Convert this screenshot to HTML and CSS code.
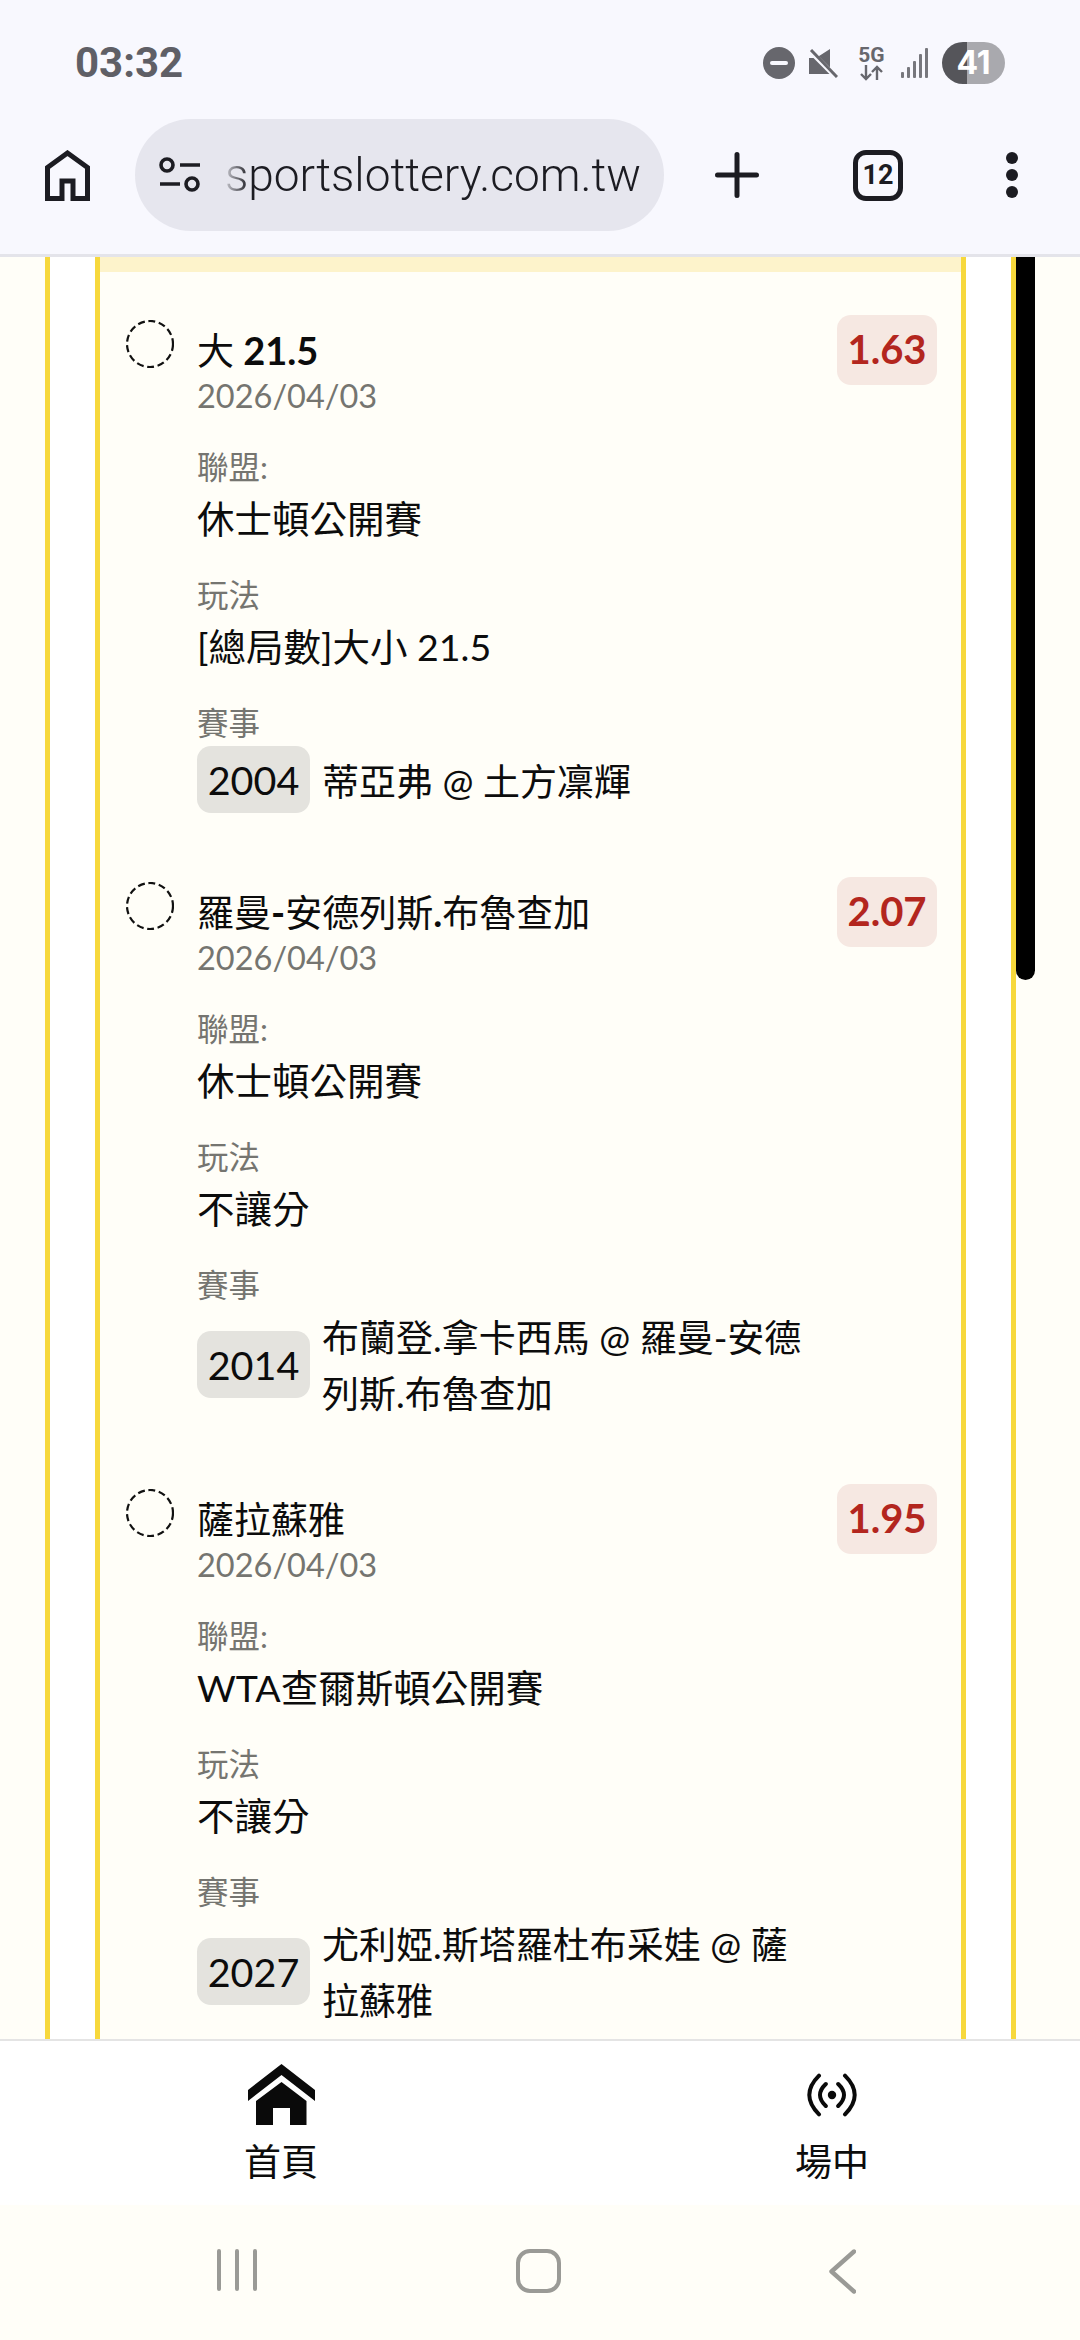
FILE: index.html
```html
<!DOCTYPE html>
<html lang="zh-Hant">
  <head>
    <meta charset="UTF-8" />
    <meta name="viewport" content="width=device-width, initial-scale=1.0" />
    <title>sportslottery.com.tw</title>
    <link rel="stylesheet" href="styles.css">
  </head>
  <body>
    <header class="chrome">
      <div class="status">
        <span class="time">03:32</span>
        <div class="status-icons">
          <span class="dnd"><span class="dnd-bar"></span></span>
          <svg class="mute" width="29" height="29" viewBox="0 0 29 29">
            <path d="M0 9H7L21 0V25H0Z" fill="#67676d" />
            <path d="M0 1L28 29" stroke="#f8f8fe" stroke-width="5" />
            <path d="M2 1L28 28" stroke="#67676d" stroke-width="3" />
          </svg>
          <div class="net">
            <span class="net-label">5G</span>
            <svg width="25" height="16" viewBox="0 0 25 16">
              <path d="M7 0V14M2 9L7 14L12 9M18 15V2M13 7L18 2L23 7" fill="none" stroke="#67676d" stroke-width="2.4" />
            </svg>
          </div>
          <svg class="signal" width="27" height="30" viewBox="0 0 27 30">
            <rect x="0" y="24" width="3" height="6" rx="1" />
            <rect x="6" y="19" width="3" height="11" rx="1" />
            <rect x="12" y="13" width="3" height="17" rx="1" />
            <rect x="18" y="6" width="3" height="24" rx="1" />
            <rect x="24" y="0" width="3" height="30" rx="1" />
          </svg>
          <span class="battery">41</span>
        </div>
      </div>
      <div class="toolbar">
        <svg class="tb-home" width="45" height="51" viewBox="0 0 45 51">
          <path d="M22.5 3L42.5 17.5V48.5H28V31H17V48.5H2.5V17.5Z" fill="none" stroke="#1c1c22" stroke-width="5" />
        </svg>
        <div class="url-pill">
          <svg width="41" height="36" viewBox="0 0 41 36">
            <circle cx="8" cy="8" r="6" fill="none" stroke="#1c1c22" stroke-width="3.6" />
            <path d="M21 8H41M1 27H21" stroke="#1c1c22" stroke-width="3.6" />
            <circle cx="33" cy="27" r="6" fill="none" stroke="#1c1c22" stroke-width="3.6" />
          </svg>
          <span class="url">sportslottery.com.tw</span>
        </div>
        <svg class="tb-plus" width="44" height="46" viewBox="0 0 44 46">
          <path d="M2.5 23H41.5M22 2.5V43.5" stroke="#1c1c22" stroke-width="5" stroke-linecap="round" />
        </svg>
        <span class="tabs">12</span>
        <div class="dots"><span></span><span></span><span></span></div>
      </div>
    </header>

    <main class="content">
      <div class="panel">
        <div class="card">
          <div class="card-top"></div>

          <section class="bet">
            <svg class="bet-mark" width="48" height="48" viewBox="0 0 48 48">
              <circle cx="24" cy="24" r="23" fill="none" stroke="#111" stroke-width="2.2" stroke-dasharray="7 3.6" />
            </svg>
            <div class="bet-main">
              <div class="bet-head">
                <div>
                  <div class="bet-title"><span class="cjk">大</span> 21.5</div>
                  <div class="bet-date">2026/04/03</div>
                </div>
                <span class="odds">1.63</span>
              </div>
              <div class="field">
                <div class="field-label">聯盟:</div>
                <div class="field-value">休士頓公開賽</div>
              </div>
              <div class="field">
                <div class="field-label">玩法</div>
                <div class="field-value">[總局數]大小 21.5</div>
              </div>
              <div class="field">
                <div class="field-label">賽事</div>
                <div class="game">
                  <span class="game-no">2004</span>
                  <span class="game-name">蒂亞弗 @ 土方凜輝</span>
                </div>
              </div>
            </div>
          </section>

          <section class="bet">
            <svg class="bet-mark" width="48" height="48" viewBox="0 0 48 48">
              <circle cx="24" cy="24" r="23" fill="none" stroke="#111" stroke-width="2.2" stroke-dasharray="7 3.6" />
            </svg>
            <div class="bet-main">
              <div class="bet-head">
                <div>
                  <div class="bet-title"><span class="cjk">羅曼</span>-<span class="cjk">安德列斯</span>.<span class="cjk">布魯查加</span></div>
                  <div class="bet-date">2026/04/03</div>
                </div>
                <span class="odds">2.07</span>
              </div>
              <div class="field">
                <div class="field-label">聯盟:</div>
                <div class="field-value">休士頓公開賽</div>
              </div>
              <div class="field">
                <div class="field-label">玩法</div>
                <div class="field-value">不讓分</div>
              </div>
              <div class="field">
                <div class="field-label">賽事</div>
                <div class="game">
                  <span class="game-no">2014</span>
                  <span class="game-name">布蘭登.拿卡西馬 @ 羅曼-安德列斯.布魯查加</span>
                </div>
              </div>
            </div>
          </section>

          <section class="bet">
            <svg class="bet-mark" width="48" height="48" viewBox="0 0 48 48">
              <circle cx="24" cy="24" r="23" fill="none" stroke="#111" stroke-width="2.2" stroke-dasharray="7 3.6" />
            </svg>
            <div class="bet-main">
              <div class="bet-head">
                <div>
                  <div class="bet-title"><span class="cjk">薩拉蘇雅</span></div>
                  <div class="bet-date">2026/04/03</div>
                </div>
                <span class="odds">1.95</span>
              </div>
              <div class="field">
                <div class="field-label">聯盟:</div>
                <div class="field-value">WTA查爾斯頓公開賽</div>
              </div>
              <div class="field">
                <div class="field-label">玩法</div>
                <div class="field-value">不讓分</div>
              </div>
              <div class="field">
                <div class="field-label">賽事</div>
                <div class="game">
                  <span class="game-no">2027</span>
                  <span class="game-name">尤利婭.斯塔羅杜布采娃 @ 薩拉蘇雅</span>
                </div>
              </div>
            </div>
          </section>
        </div>
      </div>
      <div class="scroll-thumb"></div>
    </main>

    <nav class="tabbar">
      <a class="tab-item">
        <span class="tab-icon">
          <svg width="67" height="62" viewBox="0 0 67 62">
            <path d="M33.5 0L67 26V37L33.5 11L0 37V26Z" fill="#0a0a0a" />
            <path d="M33.5 18L58.5 37V61H42V44H25V61H8V37Z" fill="#0a0a0a" />
          </svg>
        </span>
        <span class="tab-label">首頁</span>
      </a>
      <a class="tab-item">
        <span class="tab-icon">
          <svg width="54" height="44" viewBox="0 0 54 44">
            <circle cx="27" cy="22" r="4.2" fill="#0a0a0a" />
            <path d="M40 2.7Q59.4 22 40 41.3M14 2.7Q-5.4 22 14 41.3M33.2 11Q44.8 22 33.2 33M20.8 11Q9.2 22 20.8 33" fill="none" stroke="#0a0a0a" stroke-width="4" stroke-linecap="round" />
          </svg>
        </span>
        <span class="tab-label">場中</span>
      </a>
    </nav>

    <footer class="sysnav">
      <svg class="sys-recent" width="40" height="42" viewBox="0 0 40 42">
        <path d="M2 2V40M20 2V40M38 2V40" stroke="#9a9a96" stroke-width="4" stroke-linecap="round" />
      </svg>
      <span class="sys-home"></span>
      <svg class="sys-back" width="27" height="45" viewBox="0 0 27 45">
        <path d="M25 2.5L2.5 22.5L25 42.5" fill="none" stroke="#9a9a96" stroke-width="4.4" stroke-linecap="round" stroke-linejoin="round" />
      </svg>
    </footer>
  </body>
</html>
```

FILE: styles.css
```css
* {
  box-sizing: border-box;
}

html,
body {
  margin: 0;
  padding: 0;
}

body {
  width: 1080px;
  height: 2340px;
  overflow: hidden;
  display: flex;
  flex-direction: column;
  background-color: #fffef8;
  color: #0c0c0c;
  font-family: Lato, "Noto Sans CJK TC", sans-serif;
}

/* browser chrome */
.chrome {
  height: 257px;
  flex: none;
  background-color: #f8f8fe;
  border-bottom: 3px solid #e4e4ea;
}

.status {
  height: 119px;
  padding: 42px 75px 0;
  display: flex;
  justify-content: space-between;
  align-items: flex-start;
}

.time {
  font-family: Roboto, sans-serif;
  font-size: 42px;
  font-weight: 700;
  line-height: 42px;
  color: #5f5f66;
}

.status-icons {
  height: 42px;
  display: flex;
  align-items: center;
}

.dnd {
  width: 32px;
  height: 32px;
  border-radius: 50%;
  background-color: #67676d;
  display: flex;
  align-items: center;
  justify-content: center;
}

.dnd-bar {
  width: 18px;
  height: 4px;
  border-radius: 2px;
  background-color: #f8f8fe;
}

.mute {
  margin-left: 14px;
}

.net {
  margin-left: 21px;
  width: 25px;
  display: flex;
  flex-direction: column;
  align-items: center;
}

.net-label {
  font-family: Roboto, sans-serif;
  font-size: 21px;
  font-weight: 700;
  line-height: 19px;
  color: #67676d;
}

.signal {
  margin-left: 17px;
  fill: #77777d;
}

.battery {
  margin-left: 14px;
  width: 63px;
  height: 42px;
  border-radius: 21px;
  background: linear-gradient(90deg, #55555a 0 25px, #a9a9ae 25px);
  color: #fff;
  font-family: Inter, sans-serif;
  font-size: 32px;
  font-weight: 700;
  line-height: 42px;
  text-align: center;
}

.toolbar {
  height: 112px;
  padding-left: 45px;
  display: flex;
  align-items: center;
}

.url-pill {
  margin-left: 45px;
  width: 529px;
  height: 112px;
  padding-left: 24px;
  border-radius: 56px;
  background-color: #e6e6ee;
  display: flex;
  align-items: center;
  gap: 25px;
}

.url {
  font-family: Roboto, sans-serif;
  font-size: 46px;
  font-weight: 300;
  color: #1c1c22;
  -webkit-mask-image: linear-gradient(90deg, rgba(0, 0, 0, 0.15), #000 24px);
  mask-image: linear-gradient(90deg, rgba(0, 0, 0, 0.15), #000 24px);
}

.tb-plus {
  margin-left: 51px;
}

.tabs {
  margin-left: 94px;
  width: 50px;
  height: 51px;
  border: 5px solid #1c1c22;
  border-radius: 13px;
  font-family: Roboto, sans-serif;
  font-size: 27px;
  font-weight: 700;
  line-height: 41px;
  text-align: center;
  color: #1c1c22;
}

.dots {
  margin-left: 103px;
  display: flex;
  flex-direction: column;
  gap: 5px;
}

.dots span {
  width: 12px;
  height: 12px;
  border-radius: 50%;
  background-color: #1c1c22;
}

/* page */
.content {
  position: relative;
  flex: 1;
  min-height: 0;
  overflow: hidden;
}

.panel {
  margin-left: 45px;
  width: 971px;
  min-height: 100%;
  padding: 0 45px;
  background-color: #fff;
  border-left: 5px solid #f7d83c;
  border-right: 5px solid #f7d83c;
}

.card {
  min-height: 1782px;
  background-color: #fffef8;
  border-left: 5px solid #f7d83c;
  border-right: 5px solid #f7d83c;
}

.card-top {
  height: 15px;
  margin-bottom: 48px;
  background-color: #fdf3cb;
}

.scroll-thumb {
  position: absolute;
  top: 0;
  left: 1016px;
  width: 19px;
  height: 723px;
  border-radius: 0 0 10px 10px;
  background-color: #000;
}

.bet {
  padding: 0 24px 69px 26px;
  display: flex;
  gap: 23px;
}

.bet-mark {
  flex: none;
}

.bet-main {
  flex: 1;
  min-width: 0;
}

.bet-head {
  padding-top: 5px;
  display: flex;
  justify-content: space-between;
  align-items: flex-start;
}

.bet-title {
  height: 50px;
  font-size: 38px;
  font-weight: 700;
  line-height: 50px;
}

.cjk {
  font-size: 37px;
  font-weight: 400;
}

.bet-date {
  font-size: 32.5px;
  line-height: 42px;
  color: #757570;
}

.odds {
  width: 100px;
  height: 70px;
  margin-top: -10px;
  border-radius: 14px;
  background-color: #f6e8e2;
  color: #b3261e;
  font-size: 40px;
  font-weight: 700;
  line-height: 68px;
  text-align: center;
}

.field {
  margin-top: 26px;
}

.bet-head + .field {
  margin-top: 28px;
}

.field-label {
  height: 44px;
  font-size: 31.5px;
  line-height: 44px;
  color: #757570;
}

.field-value {
  height: 56px;
  margin-top: 2px;
  font-size: 37.5px;
  line-height: 56px;
}

.game {
  margin-top: 1px;
  display: flex;
  align-items: center;
  gap: 12px;
}

.game-no {
  flex: none;
  width: 113px;
  height: 67px;
  border-radius: 14px;
  background-color: #e4e3de;
  font-size: 39.5px;
  line-height: 67px;
  text-align: center;
}

.game-name {
  width: 490px;
  margin: 2px 0 -2px;
  font-size: 37px;
  line-height: 56px;
}

/* bottom tabs */
.tabbar {
  flex: none;
  height: 166px;
  padding: 23px 0 0 181px;
  background-color: #fff;
  border-top: 2px solid #e4e4e4;
  display: flex;
  gap: 351px;
}

.tab-item {
  width: 200px;
  display: flex;
  flex-direction: column;
  align-items: center;
}

.tab-icon {
  height: 62px;
  display: flex;
  align-items: center;
}

.tab-label {
  margin-top: 11px;
  font-size: 37px;
  line-height: 50px;
}

/* android nav */
.sysnav {
  flex: none;
  height: 135px;
  padding: 44px 0 0 217px;
  display: flex;
  align-items: flex-start;
}

.sys-home {
  margin-left: 259px;
  width: 45px;
  height: 44px;
  border: 4.4px solid #9a9a96;
  border-radius: 14px;
}

.sys-back {
  margin-left: 268px;
}
```
